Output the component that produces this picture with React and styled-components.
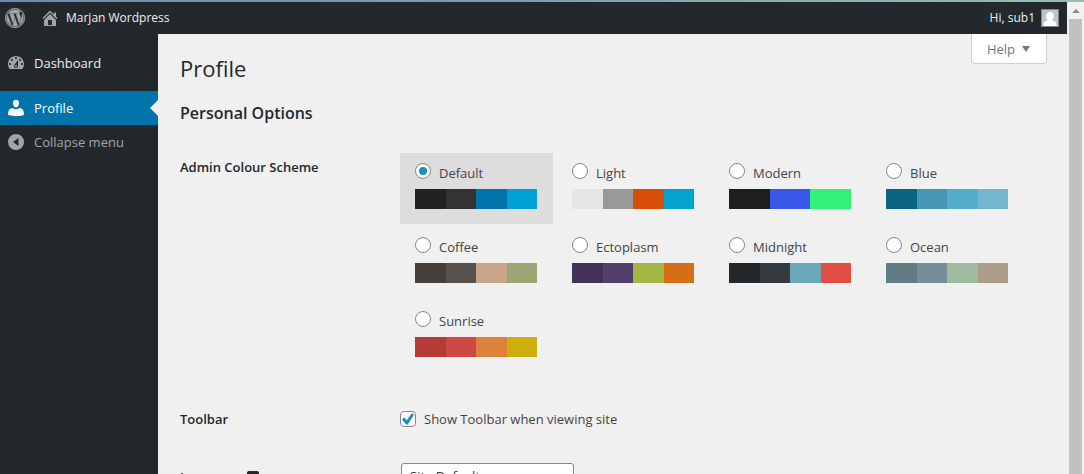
import React from 'react';
import styled, { createGlobalStyle } from 'styled-components';
import { FaWordpress } from 'react-icons/fa';

const GlobalStyle = createGlobalStyle`
  *, *::before, *::after { box-sizing: border-box; }
  body {
    margin: 0;
    background: #f0f0f0;
    color: #444;
    font-family: "Open Sans", "Noto Sans", sans-serif;
    font-size: 13px;
    line-height: 20px;
  }
`;

const Screen = styled.div`
  display: flex;
  flex-direction: column;
  height: 100vh;
  overflow: hidden;
`;

const WindowEdge = styled.div`
  flex: none;
  height: 2px;
  background: linear-gradient(90deg, #6d8bb0, #7f9fb0 50%, #97bdb2);
`;

const Viewport = styled.div`
  flex: 1;
  min-height: 0;
  display: flex;
`;

const Page = styled.div`
  flex: 1;
  min-width: 0;
  display: flex;
  flex-direction: column;
`;

const AdminBar = styled.header`
  flex: none;
  display: flex;
  align-items: center;
  gap: 15px;
  height: 32px;
  padding: 0 8px 0 5px;
  background: #23282d;
`;

const BarLink = styled.a`
  display: flex;
  align-items: center;
  gap: 6px;
  color: #eee;
  font-size: 12px;
  font-weight: 500;
  text-decoration: none;
  svg { color: #a0a5aa; }
`;

const Account = styled(BarLink)`
  margin-left: auto;
`;

const WordPressLogo = styled(FaWordpress)`
  display: block;
  width: 20px;
  height: 20px;
  stroke-width: 14px;
  overflow: visible;
`;

const Avatar = styled.svg`
  display: block;
  width: 18px;
  height: 18px;
  border: 1px solid #82878c;
  background: #c3c3c3;
`;

const Body = styled.div`
  flex: 1;
  min-height: 0;
  display: flex;
`;

const Sidebar = styled.nav`
  flex: none;
  width: 158px;
  padding-top: 12px;
  background: #23282d;
`;

const MenuLink = styled.a`
  position: relative;
  display: flex;
  align-items: center;
  gap: 8px;
  height: 34px;
  margin-bottom: ${p => (p.$spaced ? '11px' : '0')};
  padding: 0 6px;
  background: ${p => (p.$current ? '#0073aa' : 'transparent')};
  color: ${p => (p.$current ? '#fff' : '#eee')};
  text-decoration: none;
  svg { color: ${p => (p.$current ? '#fff' : '#a0a5aa')}; }

  &::after {
    content: "";
    display: ${p => (p.$current ? 'block' : 'none')};
    position: absolute;
    right: 0;
    top: 9px;
    border: 8px solid transparent;
    border-left-width: 0;
    border-right-color: #f0f0f0;
  }
`;

const CollapseButton = styled.button`
  display: flex;
  align-items: center;
  gap: 8px;
  width: 100%;
  height: 34px;
  padding: 0 6px;
  border: 0;
  background: none;
  color: #a0a5aa;
  font: inherit;
`;

const Content = styled.main`
  flex: 1;
  min-width: 0;
  padding: 0 20px 0 22px;
  overflow: hidden;
`;

const TitleRow = styled.div`
  display: flex;
  justify-content: space-between;
  align-items: flex-start;
`;

const Title = styled.h1`
  margin: 0;
  padding-top: 20px;
  color: #23282d;
  font-size: 22px;
  font-weight: 400;
  line-height: 28px;
`;

const HelpButton = styled.button`
  display: flex;
  align-items: center;
  gap: 6px;
  height: 30px;
  padding: 0 15px;
  border: 1px solid #ccd0d4;
  border-top: 0;
  border-radius: 0 0 4px 4px;
  background: #fff;
  color: #72777c;
  font: inherit;
`;

const SectionTitle = styled.h2`
  margin: 18px 0 27px;
  color: #23282d;
  font-size: 16px;
  font-weight: 600;
  line-height: 26px;
`;

const FormRow = styled.div`
  display: grid;
  grid-template-columns: 220px 1fr;
  align-items: start;
  padding-bottom: ${p => p.$after}px;
`;

const RowHeading = styled.div`
  display: flex;
  align-items: center;
  gap: 6px;
  color: #23282d;
  font-weight: 600;
  padding-top: ${p => p.$top || 0}px;
`;

const SchemeGrid = styled.div`
  display: grid;
  grid-template-columns: repeat(auto-fill, 153px);
  gap: 3px 4px;
`;

const SchemeOption = styled.label`
  display: block;
  height: 71px;
  padding: 10px 16px 15px 15px;
  background: ${p => (p.$selected ? '#ddd' : 'transparent')};
`;

const SchemeName = styled.span`
  display: flex;
  gap: 8px;
  height: 26px;
`;

const Radio = styled.input`
  appearance: none;
  flex: none;
  display: grid;
  place-items: center;
  width: 16px;
  height: 16px;
  margin: 0;
  border: 1px solid #7e8993;
  border-radius: 50%;
  background: #fff;
  &:checked::before {
    content: "";
    width: 8px;
    height: 8px;
    border-radius: 50%;
    background: #1e8cbe;
  }
`;

const Checkbox = styled.input`
  appearance: none;
  flex: none;
  display: grid;
  place-items: center;
  width: 16px;
  height: 16px;
  margin: 0;
  border: 1px solid #7e8993;
  border-radius: 4px;
  background: #fff;
  &:checked::before {
    content: "";
    width: 12px;
    height: 12px;
    background: #1e8cbe;
    clip-path: polygon(0 53%, 17% 38%, 40% 60%, 82% 3%, 100% 15%, 48% 95%, 34% 95%);
  }
`;

const SchemeLabel = styled.span`
  line-height: 20px;
`;

const Palette = styled.span`
  display: flex;
  height: 20px;
`;

const Swatch = styled.span`
  flex: 1;
  background: ${p => p.$color};
`;

const CheckLabel = styled.label`
  display: flex;
  align-items: center;
  gap: 8px;
`;

const Select = styled.select`
  appearance: none;
  width: 173px;
  height: 30px;
  margin-left: 1px;
  padding: 0 24px 4px 8px;
  border: 1px solid #7e8993;
  border-radius: 3px;
  background: #fff;
  color: #32373c;
  font: inherit;
`;

const Scrollbar = styled.div`
  flex: none;
  display: flex;
  flex-direction: column;
  align-items: center;
  width: 17px;
  background: #f1f1f1;
`;

const ScrollUp = styled.div`
  display: grid;
  place-items: center;
  height: 17px;
`;

const Thumb = styled.div`
  flex: 1;
  width: 13px;
  background: #c1c1c1;
`;

const Glyph = ({ d }) => (
  <svg width="20" height="20" viewBox="0 0 20 20" fill="currentColor" aria-hidden="true">
    <path d={d} />
  </svg>
);

const icons = {
  home: 'M16 8.5l1.53 1.53-1.06 1.06L10 4.6l-6.47 6.49-1.06-1.06L10 2.5l4 4v-2h2v4zm-6-2.46l6 5.99V18H4v-5.97zM12 17v-5H8v5h4z',
  dashboard:
    'M3.76 16h12.48c1.1-1.37 1.76-3.11 1.76-5 0-4.42-3.58-8-8-8s-8 3.58-8 8c0 1.89.66 3.63 1.76 5zM10 4c.55 0 1 .45 1 1s-.45 1-1 1-1-.45-1-1 .45-1 1-1zM6 6c.55 0 1 .45 1 1s-.45 1-1 1-1-.45-1-1 .45-1 1-1zm8 0c.55 0 1 .45 1 1s-.45 1-1 1-1-.45-1-1 .45-1 1-1zm-5.37 5.55L12 7v6c0 1.1-.9 2-2 2s-2-.9-2-2c0-.57.24-1.08.63-1.45zM4 10c.55 0 1 .45 1 1s-.45 1-1 1-1-.45-1-1 .45-1 1-1zm12 0c.55 0 1 .45 1 1s-.45 1-1 1-1-.45-1-1 .45-1 1-1zm-5 3c0-.55-.45-1-1-1s-1 .45-1 1 .45 1 1 1 1-.45 1-1z',
  user: 'M10 1.800c2 0 3.100 1.500 3 3.500-.1 2.200-1.300 4.200-3 4.200s-2.900-2-3-4.200c-.1-2 1-3.500 3-3.500zM6.500 10c1 .9 2.200 1.300 3.500 1.300s2.500-.4 3.500-1.300c2.600.5 4.300 2.300 4.300 4.500V17c-2.200.8-5 1.200-7.800 1.200S4.400 17.800 2.200 17v-2.500c0-2.200 1.700-4 4.300-4.500z',
  collapse: 'M10 2a8 8 0 1 0 0 16 8 8 0 0 0 0-16zM12.500 14L7 10l5.500-4z',
};

const schemes = [
  { name: 'Default', colors: ['#222', '#333', '#0073aa', '#00a0d2'] },
  { name: 'Light', colors: ['#e5e5e5', '#999', '#d64e07', '#04a4cc'] },
  { name: 'Modern', colors: ['#1e1e1e', '#3858e9', '#33f078'] },
  { name: 'Blue', colors: ['#096484', '#4796b3', '#52accc', '#74b6ce'] },
  { name: 'Coffee', colors: ['#46403c', '#59524c', '#c7a589', '#9ea476'] },
  { name: 'Ectoplasm', colors: ['#413256', '#523f6d', '#a3b745', '#d46f15'] },
  { name: 'Midnight', colors: ['#25282b', '#363b3f', '#69a8bb', '#e14d43'] },
  { name: 'Ocean', colors: ['#627c83', '#738e96', '#9ebaa0', '#aa9d88'] },
  { name: 'Sunrise', colors: ['#b43c38', '#cf4944', '#dd823b', '#ccaf0b'] },
];

export default function App() {
  const [scheme, setScheme] = React.useState('Default');
  return (
    <Screen>
      <GlobalStyle />
      <WindowEdge />
      <Viewport>
        <Page>
          <AdminBar>
            <BarLink href="#about" aria-label="About WordPress">
              <WordPressLogo />
            </BarLink>
            <BarLink href="#site">
              <Glyph d={icons.home} />
              Marjan Wordpress
            </BarLink>
            <Account href="#account">
              Hi, sub1
              <Avatar viewBox="0 0 16 16" aria-hidden="true">
                <path
                  fill="#fff"
                  d="M8 2c2.500 0 3.800 1.600 3.800 3.800S11 9.200 10.500 10c0 1.200 4 1.200 4 4v2h-13v-2c0-2.800 4-2.800 4-4C5 9.200 4.200 8 4.200 5.800S5.500 2 8 2z"
                />
              </Avatar>
            </Account>
          </AdminBar>
          <Body>
            <Sidebar>
              <MenuLink href="#dashboard" $spaced>
                <Glyph d={icons.dashboard} />
                Dashboard
              </MenuLink>
              <MenuLink href="#profile" $current aria-current="page">
                <Glyph d={icons.user} />
                Profile
              </MenuLink>
              <CollapseButton type="button">
                <Glyph d={icons.collapse} />
                Collapse menu
              </CollapseButton>
            </Sidebar>
            <Content>
              <TitleRow>
                <Title>Profile</Title>
                <HelpButton type="button">
                  Help
                  <svg width="10" height="8" viewBox="0 0 10 8" fill="currentColor" aria-hidden="true">
                    <path d="M1 1h8L5 7z" />
                  </svg>
                </HelpButton>
              </TitleRow>
              <SectionTitle>Personal Options</SectionTitle>
              <FormRow $after={37}>
                <RowHeading id="scheme-heading" $top={4}>Admin Colour Scheme</RowHeading>
                <SchemeGrid role="radiogroup" aria-labelledby="scheme-heading">
                  {schemes.map(({ name, colors }) => (
                    <SchemeOption key={name} $selected={name === scheme}>
                      <SchemeName>
                        <Radio
                          type="radio"
                          name="scheme"
                          checked={name === scheme}
                          onChange={() => setScheme(name)}
                        />
                        <SchemeLabel>{name}</SchemeLabel>
                      </SchemeName>
                      <Palette>
                        {colors.map(color => (
                          <Swatch key={color} $color={color} />
                        ))}
                      </Palette>
                    </SchemeOption>
                  ))}
                </SchemeGrid>
              </FormRow>
              <FormRow $after={34}>
                <RowHeading>Toolbar</RowHeading>
                <CheckLabel>
                  <Checkbox type="checkbox" defaultChecked />
                  Show Toolbar when viewing site
                </CheckLabel>
              </FormRow>
              <FormRow $after={30}>
                <RowHeading as="label" htmlFor="language" $top={4}>
                  Language
                  <svg width="12" height="12" viewBox="0 0 12 12" aria-hidden="true">
                    <rect width="12" height="12" rx="2" fill="#23282d" />
                    <path d="M3 9l3-6 3 6M4 7h4" fill="none" stroke="#f0f0f0" />
                  </svg>
                </RowHeading>
                <Select id="language">
                  <option>Site Default</option>
                </Select>
              </FormRow>
            </Content>
          </Body>
        </Page>
        <Scrollbar aria-hidden="true">
          <ScrollUp>
            <svg width="8" height="4" viewBox="0 0 8 4" fill="#8a8a8a">
              <path d="M4 0l4 4H0z" />
            </svg>
          </ScrollUp>
          <Thumb />
        </Scrollbar>
      </Viewport>
    </Screen>
  );
}
